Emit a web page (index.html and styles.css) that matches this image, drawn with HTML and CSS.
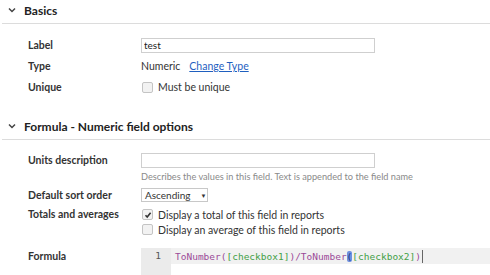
FILE: index.html
```html
<!DOCTYPE html>
<html lang="en">
<head>
    <meta charset="UTF-8">
    <title>Field settings</title>
    <link rel="stylesheet" href="styles.css">
</head>
<body>
    <div class="section">
        <div class="section-head">
            <svg class="chevron" width="8" height="6" viewBox="0 0 8 6"><path d="M1 1.5 L4 4.5 L7 1.5" fill="none" stroke="#444" stroke-width="1.5"/></svg>
            <span>Basics</span>
        </div>
        <div class="fields basics">
            <div class="row">
                <div class="lbl">Label</div>
                <div class="val"><input class="text-input" type="text" value="test"></div>
            </div>
            <div class="row">
                <div class="lbl">Type</div>
                <div class="val">Numeric <a href="#" class="link">Change Type</a></div>
            </div>
            <div class="row">
                <div class="lbl">Unique</div>
                <div class="val"><span class="check"></span>Must be unique</div>
            </div>
        </div>
    </div>

    <div class="section second">
        <div class="section-head">
            <svg class="chevron" width="8" height="6" viewBox="0 0 8 6"><path d="M1 1.5 L4 4.5 L7 1.5" fill="none" stroke="#444" stroke-width="1.5"/></svg>
            <span>Formula - Numeric field options</span>
        </div>
        <div class="fields options">
            <div class="row top">
                <div class="lbl">Units description</div>
                <div class="val stack">
                    <input class="text-input units" type="text">
                    <div class="hint">Describes the values in this field. Text is appended to the field name</div>
                </div>
            </div>
            <div class="row sort">
                <div class="lbl">Default sort order</div>
                <div class="val"><div class="select">Ascending <span class="arrow">&#9660;</span></div></div>
            </div>
            <div class="row top totals">
                <div class="lbl">Totals and averages</div>
                <div class="val stack">
                    <div class="opt"><span class="check checked"><svg width="8" height="8" viewBox="0 0 8 8"><path d="M1.5 4.2 L3.2 6 L6.6 1.8" fill="none" stroke="#333" stroke-width="1.6"/></svg></span>Display a total of this field in reports</div>
                    <div class="opt"><span class="check"></span>Display an average of this field in reports</div>
                </div>
            </div>
            <div class="row top formula">
                <div class="lbl">Formula</div>
                <div class="editor">
                    <div class="gutter"><div class="ln">1</div></div>
                    <div class="code">
                        <div class="code-line"><span class="fn">ToNumber(</span><span class="ref">[checkbox1]</span><span class="fn">)/ToNumber</span><span class="match">(</span><span class="ref">[checkbox2]</span><span class="fn">)</span><span class="cursor"></span></div>
                    </div>
                </div>
            </div>
        </div>
    </div>
</body>
</html>
```

FILE: styles.css
```css
body {
    margin: 0;
    font-family: Lato, "Open Sans", sans-serif;
    font-size: 10.5px;
    color: #333;
    background: #ffffff;
    overflow: hidden;
}
.section-head {
    display: flex;
    align-items: center;
    height: 20px;
    padding: 0 0 3px 6px;
    margin-left: 2px;
    border-bottom: 1px solid #dcdcdc;
    font-size: 12px;
    font-weight: bold;
    color: #222;
}
.chevron {
    margin-right: 8px;
}
.second {
    margin-top: 19px;
}
.fields {
    padding-left: 28px;
}
.basics {
    padding-top: 11px;
}
.options {
    padding-top: 10px;
}
.row {
    display: flex;
    align-items: center;
    min-height: 20px;
    margin-bottom: 1px;
}
.row.top {
    align-items: flex-start;
}
.lbl {
    width: 113px;
    flex-shrink: 0;
    font-weight: bold;
    line-height: 20px;
}
.val {
    display: flex;
    align-items: center;
}
.val.stack {
    flex-direction: column;
    align-items: flex-start;
}
.text-input {
    width: 234px;
    height: 15px;
    box-sizing: border-box;
    border: 1px solid #cfcfcf;
    padding: 0 2px;
    font-family: Lato, sans-serif;
    font-size: 10px;
    color: #222;
    margin: 0;
}
.units {
    margin-top: 3px;
}
.hint {
    margin-top: 2px;
    font-size: 9.2px;
    color: #8a8a8a;
    line-height: 13px;
}
.link {
    color: #1f5fbf;
    margin-left: 9px;
}
.check {
    display: inline-flex;
    align-items: center;
    justify-content: center;
    width: 9px;
    height: 9px;
    border: 1px solid #c4c4c4;
    border-radius: 2px;
    background: #f2f2f2;
    margin: 0 5px 0 1px;
}
.sort {
    margin-top: 2px;
}
.select {
    display: flex;
    align-items: center;
    width: 67px;
    height: 14px;
    box-sizing: border-box;
    border: 1px solid #c8c8c8;
    padding-left: 3px;
    font-size: 10px;
}
.arrow {
    font-size: 6px;
    margin-left: 10px;
}
.totals {
    margin-top: 2px;
}
.totals .lbl {
    line-height: 15px;
}
.opt {
    display: flex;
    align-items: center;
    height: 15px;
}
.formula {
    margin-top: 11px;
    margin-bottom: 0;
}
.formula .lbl {
    line-height: 16px;
}
.editor {
    display: flex;
    flex: 1;
    height: 27px;
}
.gutter {
    width: 30px;
    background: #ebebeb;
}
.ln {
    line-height: 16px;
    text-align: right;
    padding-right: 10px;
    font-family: "DejaVu Sans Mono", monospace;
    font-size: 9.5px;
    color: #555;
}
.code {
    flex: 1;
}
.code-line {
    display: flex;
    align-items: center;
    height: 16px;
    padding-left: 4px;
    background: #f1f1f1;
    font-family: "DejaVu Sans Mono", monospace;
    font-size: 9.5px;
    white-space: pre;
}
.fn {
    color: #9b4a98;
}
.ref {
    color: #43a047;
}
.match {
    color: #1c2f7a;
    background: #6d8fe0;
    border-radius: 2px;
}
.cursor {
    display: inline-block;
    width: 1px;
    height: 13px;
    background: #666;
    margin-left: 1px;
}
```
